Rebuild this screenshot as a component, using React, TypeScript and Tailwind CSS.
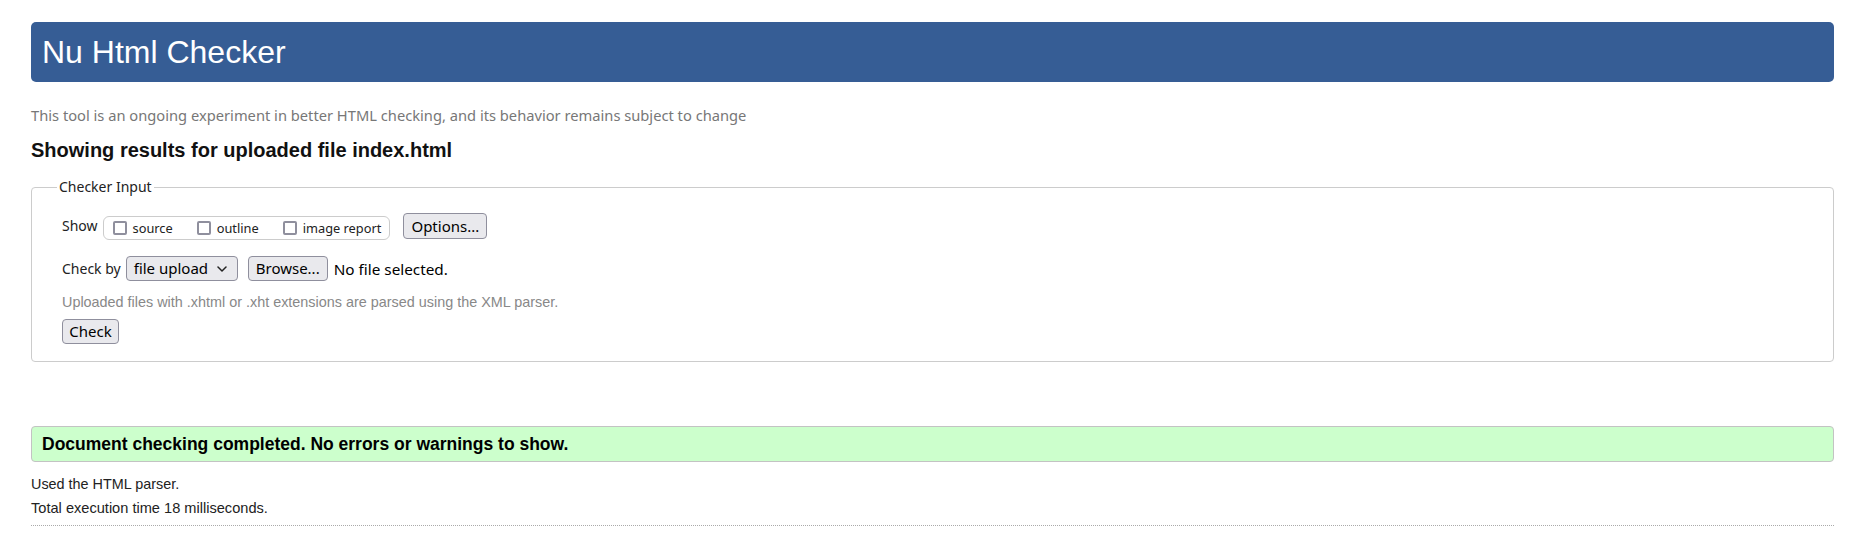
const ARIAL = "font-['Liberation_Sans',Arial,sans-serif]";
const UI = "font-['Noto_Sans',sans-serif]";

const SHOW_OPTIONS = ["source", "outline", "image report"];

function Checkbox() {
  return (
    <span className="block w-[14px] h-[14px] shrink-0 rounded-[2px] border-2 border-[#8f8f9d] bg-white" />
  );
}

function Button({ children, className = "" }: { children: React.ReactNode; className?: string }) {
  return (
    <button
      type="button"
      className={`${UI} h-[25px] px-[7px] flex items-center rounded-[4px] border border-[#8f8f9d] bg-[#e9e9ed] text-[15px] leading-none text-black ${className}`}
    >
      {children}
    </button>
  );
}

export default function App() {
  return (
    <div className="min-h-[560px] bg-white pl-[31px] pr-[21px] pt-[22px]">
      {/* Header */}
      <h1
        className={`${ARIAL} h-[60px] flex items-center pl-[11px] rounded-[5px] bg-[#365d95] text-white text-[32px] font-normal`}
      >
        Nu Html Checker
      </h1>

      <p className={`${UI} mt-[24px] text-[14.7px] leading-[18px] text-[#777]`}>
        This tool is an ongoing experiment in better HTML checking, and its behavior remains subject to change
      </p>

      <h2 className={`${ARIAL} mt-[14px] text-[20px] leading-[24px] font-bold text-[#111]`}>
        Showing results for uploaded file index.html
      </h2>

      {/* Checker Input */}
      <fieldset className="mt-[16px] rounded-[4px] border border-[#cccccc] pl-[30px] pr-[30px] pt-[17px] pb-[17px]">
        <legend className={`${UI} -ml-[5px] px-[2px] text-[14px] leading-[18px] text-[#222]`}>
          Checker Input
        </legend>

        <div className="flex items-start h-[27px]">
          <span className={`${UI} mt-[4px] text-[14px] leading-[18px] text-[#222]`}>Show</span>
          <div className="ml-[5px] mt-[3px] h-[24px] flex items-center gap-[24px] pl-[9px] pr-[8px] rounded-[6px] border border-[#cccccc]">
            {SHOW_OPTIONS.map((opt) => (
              <label key={opt} className="flex items-center gap-[6px]">
                <Checkbox />
                <span className={`${UI} text-[12.8px] leading-[16px] text-[#222]`}>{opt}</span>
              </label>
            ))}
          </div>
          <Button className="ml-[13px] h-[26px] w-[84px] justify-center">Options...</Button>
        </div>

        <div className="mt-[16px] flex items-center h-[25px]">
          <span className={`${UI} text-[14px] leading-[18px] text-[#222]`}>Check by</span>
          <button
            type="button"
            className={`${UI} ml-[5px] h-[25px] w-[112px] flex items-center justify-between pl-[7px] pr-[10px] rounded-[4px] border border-[#8f8f9d] bg-[#e9e9ed] text-[15px] leading-none text-black`}
          >
            <span>file upload</span>
            <svg width="10" height="6" viewBox="0 0 10 6" fill="none">
              <path d="M1 1l4 4 4-4" stroke="#222" strokeWidth="1.5" strokeLinecap="round" strokeLinejoin="round" />
            </svg>
          </button>
          <Button className="ml-[10px] w-[80px] justify-center">Browse...</Button>
          <span className={`${UI} ml-[6px] text-[15.3px] leading-[18px] text-black`}>No file selected.</span>
        </div>

        <p className={`${ARIAL} mt-[12px] text-[14.4px] leading-[18px] text-[#888]`}>
          Uploaded files with .xhtml or .xht extensions are parsed using the XML parser.
        </p>

        <Button className="mt-[8px] w-[57px] justify-center">Check</Button>
      </fieldset>

      {/* Result */}
      <div className="mt-[64px] h-[36px] flex items-center pl-[10px] rounded-[4px] border border-[#c3c3c3] bg-[#ccffcc]">
        <span className={`${ARIAL} text-[17.5px] font-bold text-black`}>
          Document checking completed. No errors or warnings to show.
        </span>
      </div>

      <p className={`${ARIAL} mt-[13px] text-[14.4px] leading-[18px] text-[#222]`}>Used the HTML parser.</p>
      <p className={`${ARIAL} mt-[6px] text-[14.6px] leading-[18px] text-[#222]`}>
        Total execution time 18 milliseconds.
      </p>

      <hr className="mt-[8px] border-0 border-t border-dotted border-[#aaa]" />
    </div>
  );
}
